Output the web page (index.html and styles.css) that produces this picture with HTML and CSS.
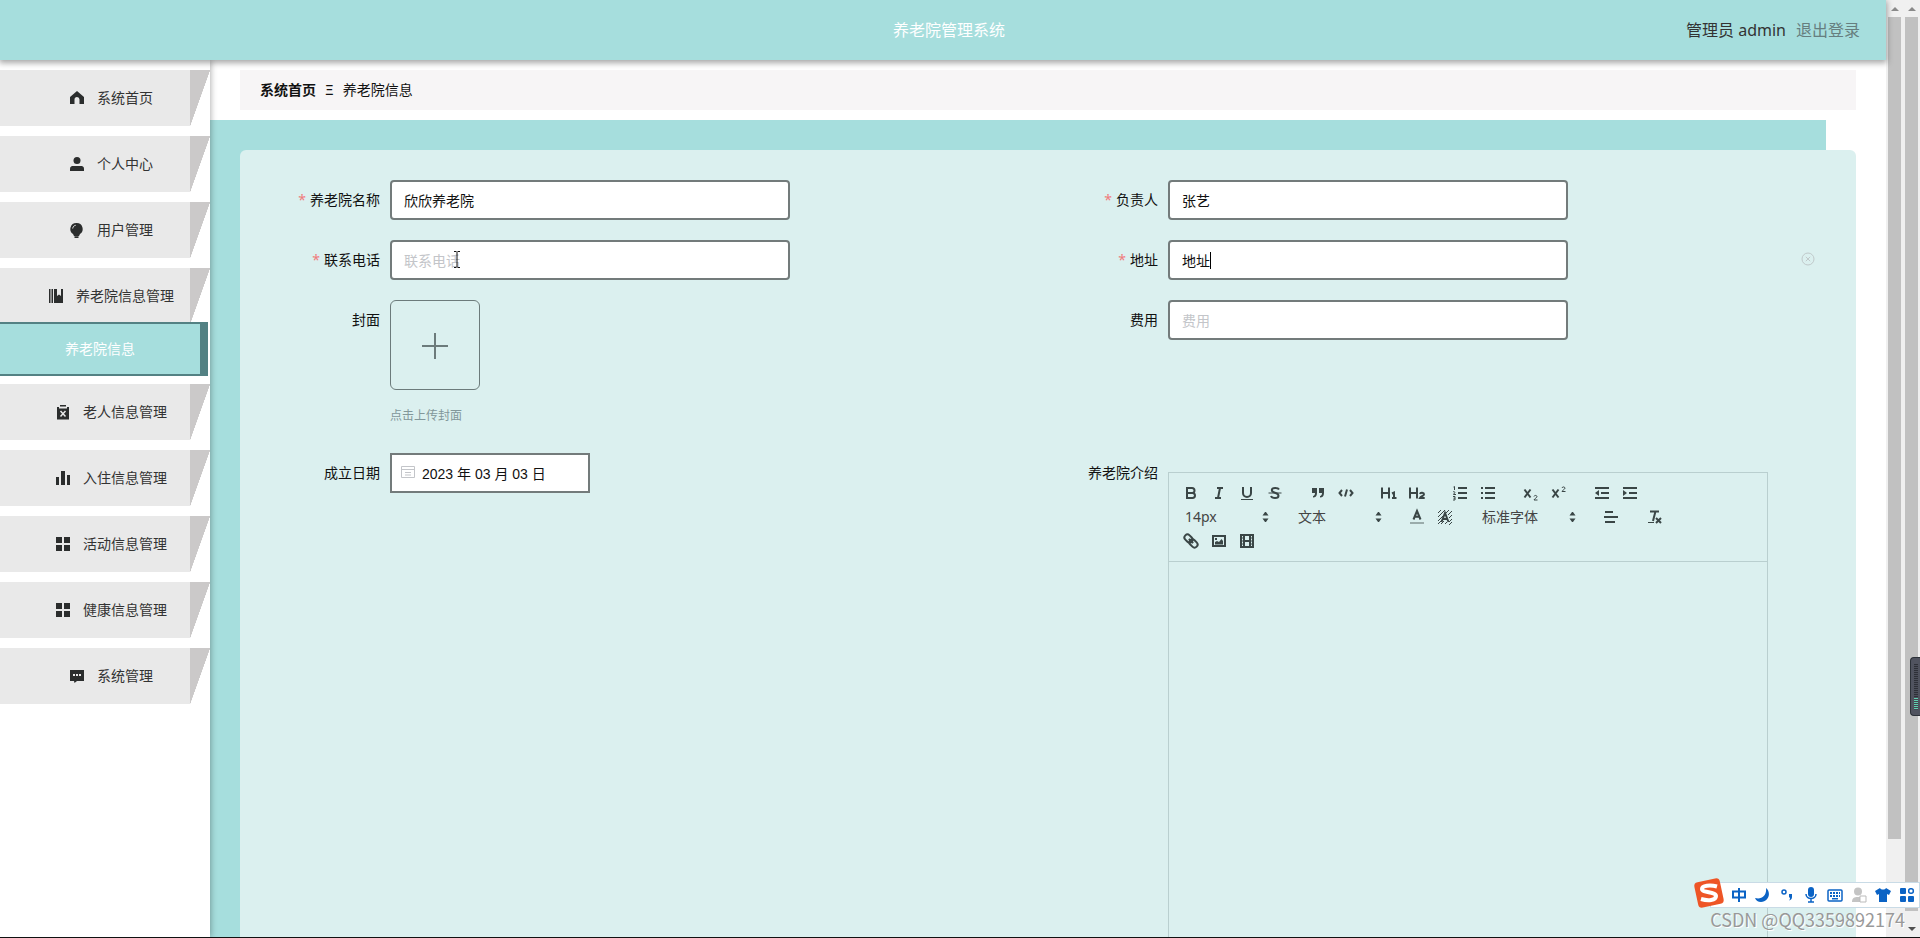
FILE: index.html
```html
<!DOCTYPE html>
<html lang="zh-CN">
<head>
<meta charset="utf-8">
<title>养老院管理系统</title>
<link rel="stylesheet" href="styles.css">
</head>
<body>
<svg class="defs" aria-hidden="true">
  <symbol id="grid" viewBox="0 0 14 14"><path d="M0 0h6v6H0zM8 0h6v6H8zM0 8h6v6H0zM8 8h6v6H8z"/></symbol>
  <symbol id="updown" viewBox="0 0 18 18"><path class="solid" d="M5.500 7.500L8 4h1l2.500 3.500zM5.500 10.500L8 14h1l2.500-3.500z"/></symbol>
</svg>
<div class="screen">
  <div class="app">
    <header class="header">
      <h1 class="title">养老院管理系统</h1>
      <div class="account"><span>管理员 admin</span><a class="logout" href="#">退出登录</a></div>
    </header>
    <div class="body">
      <nav class="sidebar">
        <a class="item" href="#"><svg class="mi" viewBox="0 0 14 14"><path d="M7 0L0 6v7h4.500V8.500a2.500 2.500 0 0 1 5 0V13H14V6z"/></svg>系统首页</a>
        <a class="item" href="#"><svg class="mi" viewBox="0 0 14 14"><circle cx="7" cy="3.500" r="3.500"/><path d="M0 14v-2.500C0 9.500 2 9 3 9h8c1 0 3 .5 3 2.500V14z"/></svg>个人中心</a>
        <a class="item" href="#"><svg class="mi" viewBox="0 0 14 14"><path d="M6.500 0a6 6 0 0 1 3.500 11l-1 2H4l-1-2A6 6 0 0 1 6.500 0zM4.500 13.300h4V15h-4z"/><path d="M2.700 5.500C3 3.500 4 2.600 5.700 2.300" fill="none" stroke="#e9e9e9"/></svg>用户管理</a>
        <a class="item" href="#"><svg class="mi" viewBox="0 0 14 14"><path d="M0 0h1.500v14H0zM2.500 0H4v14H2.500zM5 0h3v7l2-1.500L12 7V0h2v14H5z"/></svg>养老院信息管理</a>
        <a class="subitem" href="#">养老院信息</a>
        <a class="item" href="#"><svg class="mi" viewBox="0 0 14 14"><path d="M4 0h6v1.500H4zM1 2h2v1.500h8V2h2v12.500H1z"/><path d="M4.500 6l5 5.500M9.500 6l-5 5.500" stroke="#e9e9e9" stroke-width="1.500"/></svg>老人信息管理</a>
        <a class="item" href="#"><svg class="mi" viewBox="0 0 14 14"><path d="M0 6h3v8H0zM5 0h4v14H5zM11 4h3v10h-3z"/></svg>入住信息管理</a>
        <a class="item" href="#"><svg class="mi"><use href="#grid"/></svg>活动信息管理</a>
        <a class="item" href="#"><svg class="mi"><use href="#grid"/></svg>健康信息管理</a>
        <a class="item" href="#"><svg class="mi" viewBox="0 0 14 14"><path d="M0 1h14v11H7l-2.500 2L4 12H0z"/><path d="M3 5h2v2H3zM6 5h2v2H6zM9 5h2v2H9z" fill="#e9e9e9"/></svg>系统管理</a>
      </nav>
      <main class="main">
        <div class="crumbs"><b>系统首页</b><span>Ξ</span><span>养老院信息</span></div>
        <div class="stage">
        <form class="panel">
          <div class="field"><label class="label req" for="name">养老院名称</label><input class="input" id="name" value="欣欣养老院"></div>
          <div class="field"><label class="label req" for="owner">负责人</label><input class="input" id="owner" value="张艺"></div>
          <div class="field"><label class="label req" for="phone">联系电话</label>
            <div class="holder"><input class="input" id="phone" placeholder="联系电话">
            <svg class="ibeam" viewBox="0 0 8 17"><path d="M1 .5h2.500M4.500 .5H7M4 1v15M1 16.500h2.500M4.500 16.500H7" stroke="#111" fill="none"/></svg></div></div>
          <div class="field"><label class="label req" for="addr">地址</label>
            <div class="holder"><input class="input" id="addr" value="地址"><i class="caret"></i></div>
            <svg class="clear" viewBox="0 0 14 14"><circle cx="7" cy="7" r="6"/><path d="M4.800 4.800l4.400 4.400M9.200 4.800l-4.400 4.400"/></svg></div>
          <div class="field"><span class="label" id="cover">封面</span>
            <div><button class="upload" type="button" aria-labelledby="cover"><svg width="26" height="26" viewBox="0 0 26 26"><path d="M13 0v26M0 13h26" stroke="#6c7b7b" stroke-width="2"/></svg></button><p class="tip">点击上传封面</p></div></div>
          <div class="field"><label class="label" for="fee">费用</label><input class="input" id="fee" placeholder="费用"></div>
          <div class="field"><label class="label" for="date">成立日期</label>
            <div class="holder"><input class="input date" id="date" value="2023 年 03 月 03 日">
            <svg class="cal" viewBox="0 0 14 14"><path d="M.5 1.500h13v11H.5zM.5 4.500h13M4 7.500h6M4 10h6"/></svg></div></div>
          <div class="field"><span class="label" id="intro">养老院介绍</span>
            <div class="editor">
              <div class="toolbar">
                <div class="group">
                  <button type="button" title="加粗"><svg viewBox="0 0 18 18"><path d="M5 4h5a2.500 2.500 0 0 1 0 5H5zM5 9h5.500a2.500 2.500 0 0 1 0 5H5z"/></svg></button>
                  <button type="button" title="斜体"><svg viewBox="0 0 18 18"><path d="M7 4h6M5 14h6M10 4L8 14"/></svg></button>
                  <button type="button" title="下划线"><svg viewBox="0 0 18 18"><path d="M5 3v6a4 4 0 0 0 8 0V3"/><path class="thin" d="M3 15.500h12"/></svg></button>
                  <button type="button" title="删除线"><svg viewBox="0 0 18 18"><path d="M13 5.500C12 3.500 6 3.500 5.800 6c0 1.500 1.500 2.300 3.200 2.800s3.500 1.200 3.500 3c0 3-6.500 3-7.500.2"/><path class="thin" d="M2.500 9h13"/></svg></button>
                </div>
                <div class="group">
                  <button type="button" title="引用"><svg viewBox="0 0 18 18"><path class="solid" d="M3 4h5v5c0 3-1.500 4.500-4 4.500V12c1.300-.3 2-1.300 2-3H3zM10 4h5v5c0 3-1.500 4.500-4 4.500V12c1.300-.3 2-1.300 2-3h-3z"/></svg></button>
                  <button type="button" title="代码"><svg viewBox="0 0 18 18"><path d="M5 6L2.500 9 5 12M13 6l2.500 3L13 12M10 5.500l-2 7"/></svg></button>
                </div>
                <div class="group">
                  <button type="button" title="标题一"><svg viewBox="0 0 18 18"><path d="M2 3.500v11M9 3.500v11M2 9h7M12 9.500l2-1v6M12 14h4.500"/></svg></button>
                  <button type="button" title="标题二"><svg viewBox="0 0 18 18"><path d="M2 3.500v11M9 3.500v11M2 9h7M12 10c.5-2 4-1.500 4 .3 0 1.500-3 2-4 3.700h4.700"/></svg></button>
                </div>
                <div class="group">
                  <button type="button" title="有序列表"><svg viewBox="0 0 18 18"><path d="M7 4h9M7 9h9M7 14h9"/><path class="thin" d="M2.500 3l1-.5V6M2 8c1-1 2.500 0 1.500 1L2.500 10.500H5M2 12.500h2v3.500H2M2.500 14.200H4"/></svg></button>
                  <button type="button" title="无序列表"><svg viewBox="0 0 18 18"><path d="M6 4h10M6 9h10M6 14h10M2 4h2M2 9h2M2 14h2"/></svg></button>
                </div>
                <div class="group">
                  <button type="button" title="下标"><svg viewBox="0 0 18 18"><path d="M2.500 5.500l6 8M8.500 5.500l-6 8"/><path class="thin" d="M12 12.500c.3-1.600 3-1.300 3 .2 0 1-2.500 1.800-3 3.300h3.500"/></svg></button>
                  <button type="button" title="上标"><svg viewBox="0 0 18 18"><path d="M2.500 5.500l6 8M8.500 5.500l-6 8"/><path class="thin" d="M12 4c.3-1.600 3-1.300 3 .2 0 1-2.500 1.800-3 3.300h3.500"/></svg></button>
                </div>
                <div class="group">
                  <button type="button" title="减少缩进"><svg viewBox="0 0 18 18"><path d="M2 4h14M8 9h8M2 14h14"/><path class="solid" d="M6 6v6L2 9z"/></svg></button>
                  <button type="button" title="增加缩进"><svg viewBox="0 0 18 18"><path d="M2 4h14M8 9h8M2 14h14"/><path class="solid" d="M2 6v6l4-3z"/></svg></button>
                </div>
                <div class="group"><button class="pick" type="button">14px<svg viewBox="0 0 18 18"><use href="#updown"/></svg></button></div>
                <div class="group"><button class="pick" type="button">文本<svg viewBox="0 0 18 18"><use href="#updown"/></svg></button></div>
                <div class="group">
                  <button type="button" title="文字颜色"><svg viewBox="0 0 18 18"><path d="M5.500 11.500L9 3l3.500 8.500M6.800 8.800h4.400"/><path d="M2 15h14" opacity=".4"/></svg></button>
                  <button type="button" title="背景颜色"><svg viewBox="0 0 18 18"><path class="thin" d="M2 5l3-3M2 9l7-7M2 13l5-5M9 6l4-4M2 16l4-4M12 7l4-4M13 10l3-3M5 16l3-3M13 14l3-3M9 16l2-2M13 17l3-3"/><path d="M5.500 14L9 5l3.500 9M6.800 11h4.400"/></svg></button>
                </div>
                <div class="group"><button class="pick wide" type="button">标准字体<svg viewBox="0 0 18 18"><use href="#updown"/></svg></button></div>
                <div class="group"><button type="button" title="对齐"><svg viewBox="0 0 18 18"><path d="M3 4h8M2 9h14M3 14h10"/></svg></button></div>
                <div class="group"><button type="button" title="清除格式"><svg viewBox="0 0 18 18"><path d="M5 3.500h9M10.300 4L8 13M11 10l5 5M16 10l-5 5"/><path class="thin" d="M3 14.500h6"/></svg></button></div>
                <div class="group">
                  <button type="button" title="链接"><svg viewBox="0 0 18 18"><g transform="rotate(45 9 9)"><rect x="1" y="6" width="9" height="6" rx="3"/><rect x="8" y="6" width="9" height="6" rx="3"/><path d="M6 9h6"/></g></svg></button>
                  <button type="button" title="图片"><svg viewBox="0 0 18 18"><path d="M3 4h12v10H3z"/><path class="solid" d="M5 12.500V10l2-1 2 1 2.500-3L13 9v3.500zM5 6h2v2H5z"/></svg></button>
                  <button type="button" title="视频"><svg viewBox="0 0 18 18"><path d="M3 3h12v12H3zM6 3v12M12 3v12M6 9h6"/><path class="thin" d="M3 6h3M3 9h3M3 12h3M12 6h3M12 9h3M12 12h3"/></svg></button>
                </div>
              </div>
              <div class="content" contenteditable="true" role="textbox" aria-labelledby="intro"></div>
            </div></div>
        </form>
        </div>
      </main>
    </div>
  </div>
  <div class="bar inner"><i class="up"></i><i class="thumb"></i></div>
  <div class="bar"><i class="up"></i><i class="thumb"></i><i class="down"></i></div>
  <div class="meter"></div>
  <div class="ime">
    <svg class="sogou" viewBox="0 0 32 32"><rect x="3" y="3" width="26" height="26" rx="4" fill="#ee5526" transform="rotate(-12 16 16)"/><path d="M24 9.500c-7-2-15-1-15 2.500 0 4 14 2.500 14 7s-8 5-15 3" fill="none" stroke="#fff" stroke-width="4"/></svg>
    <svg viewBox="0 0 16 16"><path d="M2 4.500h12v6H2zM8 1v14" fill="none" stroke="#0b63c5" stroke-width="2"/></svg>
    <svg viewBox="0 0 16 16"><path d="M11 1c6 5 2 14-5 14-3 0-5-1.500-6-4 7 2 12-3 11-10z"/></svg>
    <svg viewBox="0 0 16 16"><circle cx="5" cy="5" r="2" fill="none" stroke="#0b63c5" stroke-width="1.500"/><path d="M10 7h3v3c0 2-1 3-3 3.500 1-1 1-2 1-3h-1z"/></svg>
    <svg viewBox="0 0 16 16"><rect x="5" y="0" width="6" height="10" rx="3"/><path d="M3 7c0 6 10 6 10 0M8 11v4M5 15h6" fill="none" stroke="#0b63c5" stroke-width="1.500"/></svg>
    <svg viewBox="0 0 16 16"><rect x="1" y="3" width="14" height="11" rx="1" fill="none" stroke="#0b63c5" stroke-width="1.500"/><path d="M3 6h10M3 9h10" fill="none" stroke="#0b63c5" stroke-width="2" stroke-dasharray="2 1"/><path d="M5 11h6v1.500H5z"/></svg>
    <svg class="off" viewBox="0 0 16 16"><circle cx="7" cy="4.500" r="4"/><path d="M1 15c0-4 2-5 6-5s6 1 6 5z"/><path d="M9 9h6v6H9z" fill="#fff" stroke="#bbb"/></svg>
    <svg viewBox="0 0 16 16"><path d="M5 1c1 2 5 2 6 0l5 3-2 4-2-1v8H4V7L2 8 0 4z"/></svg>
    <svg viewBox="0 0 16 16"><rect x="1" y="1" width="6" height="6" rx="1"/><rect x="9.700" y="1.700" width="4.600" height="4.600" rx="2" fill="none" stroke="#0b63c5" stroke-width="1.500"/><rect x="1" y="9" width="6" height="6" rx="1"/><rect x="9" y="9" width="6" height="6" rx="1"/></svg>
  </div>
  <div class="mark">CSDN @QQ3359892174</div>
</div>
</body>
</html>
```
FILE: styles.css
```css
* { box-sizing: border-box; }
body {
  margin: 0;
  font: 14px/20px "Noto Sans", "Noto Sans CJK SC", sans-serif;
  color: #111;
}
a { color: inherit; text-decoration: none; }
button { border: 0; padding: 0; background: none; font: inherit; color: inherit; }
.defs { position: absolute; width: 0; height: 0; }

.screen {
  position: relative;
  display: flex;
  height: 100vh;
  overflow: hidden;
  border-bottom: 1px solid #111;
  background: #f0f0f0;
}
.app {
  flex: 1;
  display: flex;
  flex-direction: column;
  min-width: 0;
  background: #fff;
}

.header {
  position: relative;
  z-index: 3;
  flex: none;
  display: flex;
  align-items: center;
  justify-content: center;
  height: 60px;
  background: #a6dedd;
  box-shadow: 0 2px 6px 1px rgba(0, 0, 0, .35);
}
.title { margin: 0; padding-left: 12px; font-size: 16px; font-weight: 400; color: #fff; }
.account {
  position: absolute;
  right: 26px;
  display: flex;
  gap: 10px;
  font-size: 16px;
  color: #333;
}
.logout { color: #667e7f; }

.body { flex: 1; display: flex; min-height: 0; }
.sidebar {
  position: relative;
  z-index: 2;
  flex: none;
  display: flex;
  flex-direction: column;
  gap: 10px;
  width: 210px;
  padding-top: 10px;
  background: #fff;
  box-shadow: 1px 0 6px rgba(0, 0, 0, .3);
}
.item {
  display: flex;
  align-items: center;
  justify-content: center;
  gap: 13px;
  height: 56px;
  padding-left: 13px;
  background:
    linear-gradient(#e9e9e9, #e9e9e9) left / 190px 100% no-repeat,
    linear-gradient(to bottom right, #cbc9c9 50%, #fff 51%) right / 20px 100% no-repeat;
  color: #333;
}
.mi { width: 14px; height: 14px; overflow: visible; fill: #2b2d2d; }
.subitem {
  display: flex;
  align-items: center;
  justify-content: center;
  height: 54px;
  margin: -12px 2px -2px 0;
  border: solid #538183;
  border-width: 2px 8px 2px 0;
  background: #a6dedd;
  color: #fff;
}

.main {
  flex: 1;
  display: flex;
  flex-direction: column;
  gap: 10px;
  min-width: 0;
  padding: 10px 30px 0 0;
}
.crumbs {
  flex: none;
  display: flex;
  align-items: center;
  gap: 9px;
  height: 40px;
  margin-left: 30px;
  padding: 0 20px;
  background: #f7f5f6;
}
.stage {
  flex: none;
  padding: 30px 0 0 30px;
  background: linear-gradient(#a6dedd, #a6dedd) left / calc(100% - 30px) 100% no-repeat;
}
.panel {
  display: grid;
  grid-template-columns: 1fr 1fr;
  row-gap: 20px;
  padding: 30px 30px 60px;
  border-radius: 6px;
  background: #dbf0ef;
}
.field { display: flex; align-items: flex-start; }
.label { flex: none; width: 120px; padding-right: 10px; line-height: 40px; text-align: right; }
.req::before { content: "*"; margin-right: 4px; color: #f07b7b; }
.holder { position: relative; }
.input {
  width: 400px;
  height: 40px;
  padding: 0 12px;
  border: 2px solid #737b7b;
  border-radius: 4px;
  background: #fff;
  font: inherit;
  color: #111;
}
.input::placeholder { color: #c3c5c9; opacity: 1; }
.ibeam { position: absolute; left: 63px; top: 11px; width: 8px; height: 17px; }
.caret { position: absolute; left: 42px; top: 12px; width: 1px; height: 17px; background: #000; }
.clear { width: 14px; height: 14px; margin: 12px 11px 0 auto; fill: none; stroke: #c0c9ca; }
.upload {
  display: flex;
  align-items: center;
  justify-content: center;
  width: 90px;
  height: 90px;
  padding-top: 2px;
  border: 1px solid #6c7b7b;
  border-radius: 6px;
}
.tip { margin: 16px 0 7px; font-size: 12px; color: #82979a; }
.date {
  width: 200px;
  padding-left: 30px;
  border-radius: 0;
  font-family: "Liberation Sans", "Noto Sans CJK SC", sans-serif;
}
.cal { position: absolute; left: 11px; top: 12px; width: 14px; height: 14px; fill: none; stroke: #c3c5c9; }

.editor { width: 600px; margin-top: 19px; border: 1px solid #b9cfcf; color: #444; }
.toolbar {
  display: flex;
  flex-wrap: wrap;
  padding: 8px;
  border-bottom: 1px solid #b9cfcf;
}
.group { display: flex; margin-right: 15px; }
.toolbar button { width: 28px; height: 24px; padding: 3px 5px; }
.toolbar svg { display: block; width: 18px; height: 18px; fill: none; stroke: #3a4646; stroke-width: 2; }
.toolbar .thin { stroke-width: 1; }
.solid { fill: #3a4646; stroke: none; }
.toolbar .pick {
  display: flex;
  align-items: center;
  justify-content: space-between;
  width: 98px;
  padding: 0 0 0 8px;
}
.toolbar .wide { width: 108px; }
.content { height: 500px; outline: 0; }

.bar {
  flex: none;
  display: flex;
  flex-direction: column;
  align-items: center;
  width: 17px;
  padding: 7px 0 6px;
  background: #f0f0f0;
}
.thumb { flex: 1; width: 13px; margin: 6px 0 16px; background: #c1c1c1; }
.inner .thumb { margin-bottom: 92px; }
.up, .down { border: 4px solid transparent; border-top: 0; border-bottom-color: #8a8a8a; }
.down { border-top: 4px solid #505050; border-bottom: 0; }

.meter {
  position: absolute;
  right: 0;
  top: 657px;
  width: 10px;
  height: 59px;
  border: 1px solid #2c3138;
  border-right: 0;
  border-radius: 4px 0 0 4px;
  background:
    repeating-linear-gradient(#5fd0b0 0 1px, #42454f 1px 2px) 3px 40px / 4px 12px no-repeat,
    repeating-linear-gradient(#2e3038 0 1px, #4c4f5a 1px 2px) 3px 6px / 4px 34px no-repeat,
    #50535f;
}
.ime {
  position: absolute;
  right: 0;
  bottom: 29px;
  display: flex;
  align-items: center;
  gap: 8px;
  width: 210px;
  height: 26px;
  padding-left: 20px;
  border: 1px solid #c9dbe6;
  background: #fff;
}
.ime svg { flex: none; width: 16px; height: 16px; fill: #0b63c5; }
.ime .off { fill: #c4c4c4; }
.ime .sogou { position: absolute; left: -18px; top: -6px; width: 32px; height: 32px; }
.mark {
  position: absolute;
  right: 15px;
  bottom: 6px;
  font: 18px/24px "Noto Sans CJK SC", sans-serif;
  color: #999;
  text-shadow: 1px 1px 0 #fff;
}
```
